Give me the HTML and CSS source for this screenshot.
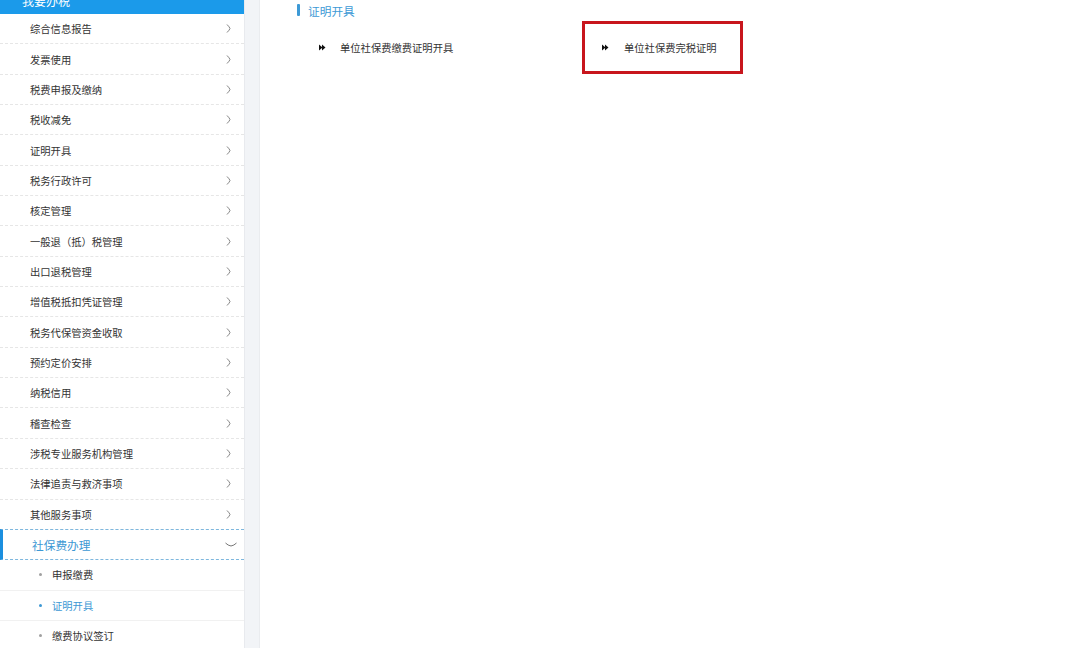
FILE: index.html
```html
<!DOCTYPE html>
<html lang="zh-CN">
<head>
<meta charset="utf-8">
<title>证明开具</title>
<link rel="stylesheet" href="styles.css">
</head>
<body>
<div class="page">
  <aside class="sidebar">
    <div class="side-head"><span>我要办税</span></div>
    <ul class="menu">
      <li class="item"><span>综合信息报告</span><svg class="chev" viewBox="0 0 5 9"><path d="M1 0.5 Q3.5 3 4 4.5 Q3.5 6 1 8.5"/></svg></li>
      <li class="item"><span>发票使用</span><svg class="chev" viewBox="0 0 5 9"><path d="M1 0.5 Q3.5 3 4 4.5 Q3.5 6 1 8.5"/></svg></li>
      <li class="item"><span>税费申报及缴纳</span><svg class="chev" viewBox="0 0 5 9"><path d="M1 0.5 Q3.5 3 4 4.5 Q3.5 6 1 8.5"/></svg></li>
      <li class="item"><span>税收减免</span><svg class="chev" viewBox="0 0 5 9"><path d="M1 0.5 Q3.5 3 4 4.5 Q3.5 6 1 8.5"/></svg></li>
      <li class="item"><span>证明开具</span><svg class="chev" viewBox="0 0 5 9"><path d="M1 0.5 Q3.5 3 4 4.5 Q3.5 6 1 8.5"/></svg></li>
      <li class="item"><span>税务行政许可</span><svg class="chev" viewBox="0 0 5 9"><path d="M1 0.5 Q3.5 3 4 4.5 Q3.5 6 1 8.5"/></svg></li>
      <li class="item"><span>核定管理</span><svg class="chev" viewBox="0 0 5 9"><path d="M1 0.5 Q3.5 3 4 4.5 Q3.5 6 1 8.5"/></svg></li>
      <li class="item"><span>一般退（抵）税管理</span><svg class="chev" viewBox="0 0 5 9"><path d="M1 0.5 Q3.5 3 4 4.5 Q3.5 6 1 8.5"/></svg></li>
      <li class="item"><span>出口退税管理</span><svg class="chev" viewBox="0 0 5 9"><path d="M1 0.5 Q3.5 3 4 4.5 Q3.5 6 1 8.5"/></svg></li>
      <li class="item"><span>增值税抵扣凭证管理</span><svg class="chev" viewBox="0 0 5 9"><path d="M1 0.5 Q3.5 3 4 4.5 Q3.5 6 1 8.5"/></svg></li>
      <li class="item"><span>税务代保管资金收取</span><svg class="chev" viewBox="0 0 5 9"><path d="M1 0.5 Q3.5 3 4 4.5 Q3.5 6 1 8.5"/></svg></li>
      <li class="item"><span>预约定价安排</span><svg class="chev" viewBox="0 0 5 9"><path d="M1 0.5 Q3.5 3 4 4.5 Q3.5 6 1 8.5"/></svg></li>
      <li class="item"><span>纳税信用</span><svg class="chev" viewBox="0 0 5 9"><path d="M1 0.5 Q3.5 3 4 4.5 Q3.5 6 1 8.5"/></svg></li>
      <li class="item"><span>稽查检查</span><svg class="chev" viewBox="0 0 5 9"><path d="M1 0.5 Q3.5 3 4 4.5 Q3.5 6 1 8.5"/></svg></li>
      <li class="item"><span>涉税专业服务机构管理</span><svg class="chev" viewBox="0 0 5 9"><path d="M1 0.5 Q3.5 3 4 4.5 Q3.5 6 1 8.5"/></svg></li>
      <li class="item"><span>法律追责与救济事项</span><svg class="chev" viewBox="0 0 5 9"><path d="M1 0.5 Q3.5 3 4 4.5 Q3.5 6 1 8.5"/></svg></li>
      <li class="item"><span>其他服务事项</span><svg class="chev" viewBox="0 0 5 9"><path d="M1 0.5 Q3.5 3 4 4.5 Q3.5 6 1 8.5"/></svg></li>
      <li class="item active"><span>社保费办理</span><svg class="chev-down" viewBox="0 0 12 5"><path d="M0.5 1 Q3 3.5 6 4 Q9 3.5 11.5 1"/></svg></li>
      <li class="sub"><i class="dot"></i><span>申报缴费</span></li>
      <li class="sub current"><i class="dot"></i><span>证明开具</span></li>
      <li class="sub"><i class="dot"></i><span>缴费协议签订</span></li>
    </ul>
  </aside>
  <div class="gutter"></div>
  <main class="main">
    <h2 class="title">证明开具</h2>
    <div class="links">
      <div class="link first">
        <svg class="arrow" viewBox="0 0 7 7"><path d="M0 0.5 L3.5 3.5 L0 6.5Z M3 0.5 L6.5 3.5 L3 6.5Z"/></svg>
        <span>单位社保费缴费证明开具</span>
      </div>
      <div class="link boxed">
        <svg class="arrow" viewBox="0 0 7 7"><path d="M0 0.5 L3.5 3.5 L0 6.5Z M3 0.5 L6.5 3.5 L3 6.5Z"/></svg>
        <span>单位社保费完税证明</span>
      </div>
    </div>
  </main>
</div>
</body>
</html>
```

FILE: styles.css
```css
html, body {
  margin: 0;
  padding: 0;
  background: #ffffff;
  font-family: "Noto Sans CJK SC", "Noto Sans", sans-serif;
}

.page {
  display: flex;
  width: 1080px;
  height: 648px;
  overflow: hidden;
}

.sidebar {
  width: 244px;
  flex: none;
  background: #ffffff;
}

.side-head {
  height: 14px;
  background: #1b9aea;
  overflow: hidden;
  padding-left: 22px;
}

.side-head span {
  display: block;
  color: #ffffff;
  font-size: 12px;
  line-height: 14px;
  margin-top: -6px;
}

.menu {
  list-style: none;
  margin: 0;
  padding: 0;
}

.item {
  box-sizing: border-box;
  height: 30.35px;
  display: flex;
  align-items: center;
  justify-content: space-between;
  padding: 0 13px 0 30px;
  border-bottom: 1px dashed #e6e6e6;
  font-size: 10.3px;
  color: #333333;
}

.chev {
  width: 5px;
  height: 9px;
  fill: none;
  stroke: #777777;
  stroke-width: 0.9;
}

.item.active {
  border-left: 3px solid #1b8fdf;
  border-top: 1px dashed #7db7de;
  border-bottom: 1px dashed #7db7de;
  padding-left: 29px;
  padding-right: 7px;
  margin-top: -1px;
  height: 31.35px;
  font-size: 11.7px;
  color: #3d98d4;
}

.chev-down {
  width: 12px;
  height: 5px;
  fill: none;
  stroke: #666666;
  stroke-width: 0.9;
}

.sub {
  box-sizing: border-box;
  height: 30.35px;
  display: flex;
  align-items: center;
  padding-left: 39px;
  border-bottom: 1px solid #f1f1f1;
  font-size: 10.3px;
  color: #333333;
}

.sub .dot {
  width: 3px;
  height: 3px;
  border-radius: 50%;
  background: #a0a0a0;
  margin-right: 10px;
}

.sub.current {
  color: #3d98d4;
}

.sub.current .dot {
  background: #3d98d4;
}

.gutter {
  width: 14px;
  flex: none;
  background: #f2f4f7;
  border-left: 1px solid #e8eaee;
  border-right: 1px solid #eaecef;
}

.main {
  flex: 1;
  padding-left: 37px;
}

.title {
  margin: 0;
  margin-top: -1px;
  height: 22px;
  display: flex;
  align-items: center;
  font-size: 11.7px;
  font-weight: normal;
  color: #3d9ad6;
}

.title::before {
  content: "";
  width: 3px;
  height: 12px;
  background: #3d9ad6;
  border-radius: 1px;
  margin-right: 8px;
}

.links {
  display: flex;
  align-items: center;
  padding-left: 22px;
}

.link {
  display: flex;
  align-items: center;
  font-size: 10.3px;
  color: #333333;
}

.link.first {
  width: 263px;
}

.link.first .arrow {
  margin-right: 14px;
}

.link.boxed {
  box-sizing: border-box;
  width: 161px;
  height: 53px;
  border: 3px solid #c8161d;
  padding-left: 17px;
}

.link.boxed .arrow {
  margin-right: 15px;
}

.arrow {
  width: 7px;
  height: 7px;
  fill: #111111;
}
```
